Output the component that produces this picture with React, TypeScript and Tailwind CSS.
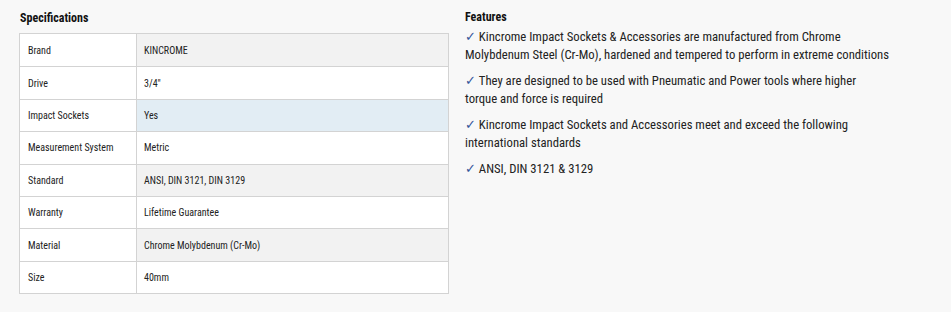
import React from "react";

const rows: [string, string][] = [
  ["Brand", "KINCROME"],
  ["Drive", "3/4\""],
  ["Impact Sockets", "Yes"],
  ["Measurement System", "Metric"],
  ["Standard", "ANSI, DIN 3121, DIN 3129"],
  ["Warranty", "Lifetime Guarantee"],
  ["Material", "Chrome Molybdenum (Cr-Mo)"],
  ["Size", "40mm"],
];

const features: string[][] = [
  [
    "Kincrome Impact Sockets & Accessories are manufactured from Chrome",
    "Molybdenum Steel (Cr-Mo), hardened and tempered to perform in extreme conditions",
  ],
  ["They are designed to be used with Pneumatic and Power tools where higher", "torque and force is required"],
  ["Kincrome Impact Sockets and Accessories meet and exceed the following", "international standards"],
  ["ANSI, DIN 3121 & 3129"],
];

export default function App() {
  return (
    <div
      className="w-[951px] h-[312px] bg-[#f8f8f8] text-[#222] flex"
      style={{ fontFamily: '"Roboto Condensed", "DejaVu Sans Condensed", sans-serif' }}
    >
      <div className="w-[430px] ml-[19px] pt-[10px]">
        <h2 className="text-[12px] font-bold leading-[16px] pl-[1px] text-[#111]">Specifications</h2>
        <div className="mt-[7px] border border-[#d3d3d3] bg-white">
          {rows.map(([k, v], i) => {
            const valBg = i === 2 ? "bg-[#e2edf4]" : i % 2 === 0 ? "bg-[#f2f2f2]" : "bg-white";
            return (
              <div key={k} className={`flex h-[32.4px] ${i > 0 ? "border-t border-[#d3d3d3]" : ""}`}>
                <div className="w-[117px] shrink-0 border-r border-[#d3d3d3] bg-white flex items-center pl-[8px] text-[10px]">
                  {k}
                </div>
                <div className={`flex-1 flex items-center pl-[7px] text-[10px] ${valBg}`}>{v}</div>
              </div>
            );
          })}
        </div>
      </div>
      <div className="ml-[16px] pt-[9px] w-[460px]">
        <h2 className="text-[12px] font-bold leading-[16px] text-[#111]">Features</h2>
        <div className="mt-[3px] flex flex-col gap-[8px]">
          {features.map((lines) => (
            <p key={lines[0]} className="text-[12.7px] leading-[18px]">
              <span
                className="text-[#34559a] font-bold text-[13px]"
                style={{ fontFamily: '"DejaVu Sans", sans-serif' }}
              >
                ✓
              </span>
              &nbsp;{lines[0]}
              {lines.slice(1).map((l) => (
                <React.Fragment key={l}>
                  <br />
                  {l}
                </React.Fragment>
              ))}
            </p>
          ))}
        </div>
      </div>
    </div>
  );
}
